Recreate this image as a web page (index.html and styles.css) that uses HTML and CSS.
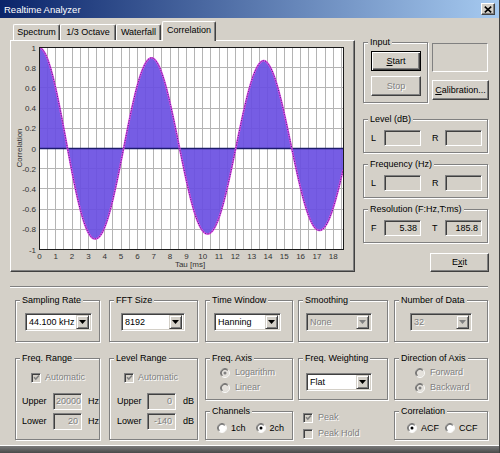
FILE: index.html
```html
<!DOCTYPE html>
<html>
<head>
<meta charset="utf-8">
<title>Realtime Analyzer</title>
<link rel="stylesheet" href="styles.css">
</head>
<body>
<div class="window">
  <div class="titlebar">
    <span class="title">Realtime Analyzer</span>
    <span class="close"><svg class="close-x" viewBox="0 0 8 7"><path d="M0.8 0.6L7.2 6.4M7.2 0.6L0.8 6.4"/></svg></span>
  </div>

  <div class="top">
    <div class="tabarea">
      <div class="tabs">
        <div class="tab t1">Spectrum</div>
        <div class="tab t2">1/3 Octave</div>
        <div class="tab t3">Waterfall</div>
        <div class="tab active">Correlation</div>
      </div>
      <div class="panel">
        <svg class="chart" width="343" height="230" viewBox="0 0 343 230">
          <rect class="plot-bg" x="28.5" y="6.5" width="304" height="202"/>
          <path class="grid" d="M36.5 7V208M44.5 7V208M52.5 7V208M61.5 7V208M69.5 7V208M77.5 7V208M85.5 7V208M93.5 7V208M101.5 7V208M110.5 7V208M118.5 7V208M126.5 7V208M134.5 7V208M142.5 7V208M150.5 7V208M159.5 7V208M167.5 7V208M175.5 7V208M183.5 7V208M191.5 7V208M199.5 7V208M208.5 7V208M216.5 7V208M224.5 7V208M232.5 7V208M240.5 7V208M248.5 7V208M256.5 7V208M265.5 7V208M273.5 7V208M281.5 7V208M289.5 7V208M297.5 7V208M305.5 7V208M314.5 7V208M322.5 7V208M330.5 7V208M29 26.5H332M29 46.5H332M29 67.5H332M29 87.5H332M29 127.5H332M29 147.5H332M29 168.5H332M29 188.5H332"/>
          <path id="fill" class="curve-fill" d=""/>
          <path class="zero" d="M28.5 107.5H332.5"/>
          <path id="curve" class="curve-line" d=""/>
          <path id="curve2" class="curve-dots" d=""/>
          <rect class="plot-border" x="28.5" y="6.5" width="304" height="202"/>
          <text class="ax yl" x="25" y="9.5">1</text>
          <text class="ax yl" x="25" y="29.7">0.8</text>
          <text class="ax yl" x="25" y="49.9">0.6</text>
          <text class="ax yl" x="25" y="70.1">0.4</text>
          <text class="ax yl" x="25" y="90.3">0.2</text>
          <text class="ax yl" x="25" y="110.5">0</text>
          <text class="ax yl" x="25" y="130.7">-0.2</text>
          <text class="ax yl" x="25" y="150.9">-0.4</text>
          <text class="ax yl" x="25" y="171.1">-0.6</text>
          <text class="ax yl" x="25" y="191.3">-0.8</text>
          <text class="ax yl" x="25" y="211.5">-1</text>
          <text class="ax xl" x="28.5" y="217.5">0</text>
          <text class="ax xl" x="44.8" y="217.5">1</text>
          <text class="ax xl" x="61.1" y="217.5">2</text>
          <text class="ax xl" x="77.5" y="217.5">3</text>
          <text class="ax xl" x="93.8" y="217.5">4</text>
          <text class="ax xl" x="110.1" y="217.5">5</text>
          <text class="ax xl" x="126.4" y="217.5">6</text>
          <text class="ax xl" x="142.7" y="217.5">7</text>
          <text class="ax xl" x="159.1" y="217.5">8</text>
          <text class="ax xl" x="175.4" y="217.5">9</text>
          <text class="ax xl" x="191.7" y="217.5">10</text>
          <text class="ax xl" x="208" y="217.5">11</text>
          <text class="ax xl" x="224.3" y="217.5">12</text>
          <text class="ax xl" x="240.7" y="217.5">13</text>
          <text class="ax xl" x="257" y="217.5">14</text>
          <text class="ax xl" x="273.3" y="217.5">15</text>
          <text class="ax xl" x="289.6" y="217.5">16</text>
          <text class="ax xl" x="305.9" y="217.5">17</text>
          <text class="ax xl" x="322.3" y="217.5">18</text>
          <text class="ax xl" x="179" y="225.5">Tau [ms]</text>
          <text class="ax xl" transform="translate(11 107) rotate(-90)">Correlation</text>
        </svg>
      </div>
    </div>

    <div class="side">
      <div class="side-top">
        <div class="group g-input">
          <div class="gtitle">Input</div>
          <div class="gbody input-body">
            <div class="btn w50 default"><span><u>S</u>tart</span></div>
            <div class="btn w50 disabled"><span>Stop</span></div>
          </div>
        </div>
        <div class="side-tr">
          <div class="frame"></div>
          <div class="btn w57"><span><u>C</u>alibration...</span></div>
        </div>
      </div>

      <div class="group g-side g-level">
        <div class="gtitle">Level (dB)</div>
        <div class="gbody side-body">
          <div class="lr-row">
            <span class="lbl">L</span><span class="field f37"></span>
            <span class="lbl lbl-r">R</span><span class="field f37"></span>
          </div>
        </div>
      </div>

      <div class="group g-side g-next">
        <div class="gtitle">Frequency (Hz)</div>
        <div class="gbody side-body">
          <div class="lr-row">
            <span class="lbl">L</span><span class="field f37"></span>
            <span class="lbl lbl-r">R</span><span class="field f37"></span>
          </div>
        </div>
      </div>

      <div class="group g-side g-next">
        <div class="gtitle">Resolution (F:Hz,T:ms)</div>
        <div class="gbody side-body">
          <div class="lr-row">
            <span class="lbl">F</span><span class="field f37">5.38</span>
            <span class="lbl lbl-r">T</span><span class="field f37">185.8</span>
          </div>
        </div>
      </div>

      <div class="btn exit"><span>E<u>x</u>it</span></div>
    </div>
  </div>

  <div class="sep"></div>

  <div class="controls">
    <div class="group c-sr">
      <div class="gtitle">Sampling Rate</div>
      <div class="gbody sel-body pl9">
        <div class="select w67"><span class="val">44.100 kHz</span><span class="dd"><svg class="arrow" viewBox="0 0 7 4"><path d="M0 0H7L3.5 4Z"/></svg></span></div>
      </div>
    </div>
    <div class="group c-fft">
      <div class="gtitle">FFT Size</div>
      <div class="gbody sel-body pl11">
        <div class="select w64"><span class="val">8192</span><span class="dd"><svg class="arrow" viewBox="0 0 7 4"><path d="M0 0H7L3.5 4Z"/></svg></span></div>
      </div>
    </div>
    <div class="group c-tw">
      <div class="gtitle">Time Window</div>
      <div class="gbody sel-body pl8">
        <div class="select w67"><span class="val">Hanning</span><span class="dd"><svg class="arrow" viewBox="0 0 7 4"><path d="M0 0H7L3.5 4Z"/></svg></span></div>
      </div>
    </div>
    <div class="group c-sm">
      <div class="gtitle">Smoothing</div>
      <div class="gbody sel-body pl7">
        <div class="select w66 sel-dis"><span class="val">None</span><span class="dd"><svg class="arrow" viewBox="0 0 7 4"><path d="M0 0H7L3.5 4Z"/></svg></span></div>
      </div>
    </div>
    <div class="group c-nd">
      <div class="gtitle">Number of Data</div>
      <div class="gbody sel-body pl15">
        <div class="select w62 sel-dis"><span class="val">32</span><span class="dd"><svg class="arrow" viewBox="0 0 7 4"><path d="M0 0H7L3.5 4Z"/></svg></span></div>
      </div>
    </div>

    <div class="group c-fr">
      <div class="gtitle">Freq. Range</div>
      <div class="gbody range-body">
        <div class="chkrow pl15"><span class="chk dis"><svg class="tick" viewBox="0 0 7 7"><path d="M1 3.3L2.8 5.1L6 1.6"/></svg></span><span class="disabled">Automatic</span></div>
        <div class="numrow first pl6"><span class="nlbl w31">Upper</span><span class="field w29 fdis">20000</span><span class="unit">Hz</span></div>
        <div class="numrow pl6"><span class="nlbl w31">Lower</span><span class="field w29 fdis">20</span><span class="unit">Hz</span></div>
      </div>
    </div>
    <div class="group c-lr">
      <div class="gtitle">Level Range</div>
      <div class="gbody range-body">
        <div class="chkrow pl14"><span class="chk dis"><svg class="tick" viewBox="0 0 7 7"><path d="M1 3.3L2.8 5.1L6 1.6"/></svg></span><span class="disabled">Automatic</span></div>
        <div class="numrow first pl7"><span class="nlbl w30">Upper</span><span class="field w29 fdis">0</span><span class="unit u7">dB</span></div>
        <div class="numrow pl7"><span class="nlbl w30">Lower</span><span class="field w29 fdis">-140</span><span class="unit u7">dB</span></div>
      </div>
    </div>
    <div class="group c-fa">
      <div class="gtitle">Freq. Axis</div>
      <div class="gbody radio-body pl14">
        <div class="rrow"><svg class="rb dis" viewBox="0 0 12 12"><circle class="rb-bg" cx="6" cy="6" r="5"/><path class="rb-d" d="M2.1 9.9A5.5 5.5 0 0 1 9.9 2.1"/><path class="rb-d2" d="M2.8 9.2A4.5 4.5 0 0 1 9.2 2.8"/><path class="rb-l" d="M9.9 2.1A5.5 5.5 0 0 1 2.1 9.9"/><circle class="rb-dot" cx="6" cy="6" r="1.8"/></svg><span class="disabled">Logarithm</span></div>
        <div class="rrow"><svg class="rb dis" viewBox="0 0 12 12"><circle class="rb-bg" cx="6" cy="6" r="5"/><path class="rb-d" d="M2.1 9.9A5.5 5.5 0 0 1 9.9 2.1"/><path class="rb-d2" d="M2.8 9.2A4.5 4.5 0 0 1 9.2 2.8"/><path class="rb-l" d="M9.9 2.1A5.5 5.5 0 0 1 2.1 9.9"/></svg><span class="disabled">Linear</span></div>
      </div>
    </div>
    <div class="group c-ch">
      <div class="gtitle">Channels</div>
      <div class="gbody one-row pl11">
        <svg class="rb" viewBox="0 0 12 12"><circle class="rb-bg" cx="6" cy="6" r="5"/><path class="rb-d" d="M2.1 9.9A5.5 5.5 0 0 1 9.9 2.1"/><path class="rb-d2" d="M2.8 9.2A4.5 4.5 0 0 1 9.2 2.8"/><path class="rb-l" d="M9.9 2.1A5.5 5.5 0 0 1 2.1 9.9"/></svg><span class="rtxt">1ch</span>
        <svg class="rb rb-next" viewBox="0 0 12 12"><circle class="rb-bg" cx="6" cy="6" r="5"/><path class="rb-d" d="M2.1 9.9A5.5 5.5 0 0 1 9.9 2.1"/><path class="rb-d2" d="M2.8 9.2A4.5 4.5 0 0 1 9.2 2.8"/><path class="rb-l" d="M9.9 2.1A5.5 5.5 0 0 1 2.1 9.9"/><circle class="rb-dot" cx="6" cy="6" r="1.8"/></svg><span class="rtxt">2ch</span>
      </div>
    </div>
    <div class="group c-fw">
      <div class="gtitle">Freq. Weighting</div>
      <div class="gbody sel-body2 pl7">
        <div class="select w66"><span class="val">Flat</span><span class="dd"><svg class="arrow" viewBox="0 0 7 4"><path d="M0 0H7L3.5 4Z"/></svg></span></div>
      </div>
    </div>
    <div class="c-pk">
      <div class="chkrow2"><span class="chk dis"><svg class="tick" viewBox="0 0 7 7"><path d="M1 3.3L2.8 5.1L6 1.6"/></svg></span><span class="disabled">Peak</span></div>
      <div class="chkrow2"><span class="chk dis"></span><span class="disabled">Peak Hold</span></div>
    </div>
    <div class="group c-da">
      <div class="gtitle">Direction of Axis</div>
      <div class="gbody radio-body pl20">
        <div class="rrow"><svg class="rb dis" viewBox="0 0 12 12"><circle class="rb-bg" cx="6" cy="6" r="5"/><path class="rb-d" d="M2.1 9.9A5.5 5.5 0 0 1 9.9 2.1"/><path class="rb-d2" d="M2.8 9.2A4.5 4.5 0 0 1 9.2 2.8"/><path class="rb-l" d="M9.9 2.1A5.5 5.5 0 0 1 2.1 9.9"/></svg><span class="disabled">Forward</span></div>
        <div class="rrow"><svg class="rb dis" viewBox="0 0 12 12"><circle class="rb-bg" cx="6" cy="6" r="5"/><path class="rb-d" d="M2.1 9.9A5.5 5.5 0 0 1 9.9 2.1"/><path class="rb-d2" d="M2.8 9.2A4.5 4.5 0 0 1 9.2 2.8"/><path class="rb-l" d="M9.9 2.1A5.5 5.5 0 0 1 2.1 9.9"/><circle class="rb-dot" cx="6" cy="6" r="1.8"/></svg><span class="disabled">Backward</span></div>
      </div>
    </div>
    <div class="group c-co">
      <div class="gtitle">Correlation</div>
      <div class="gbody one-row pl12">
        <svg class="rb" viewBox="0 0 12 12"><circle class="rb-bg" cx="6" cy="6" r="5"/><path class="rb-d" d="M2.1 9.9A5.5 5.5 0 0 1 9.9 2.1"/><path class="rb-d2" d="M2.8 9.2A4.5 4.5 0 0 1 9.2 2.8"/><path class="rb-l" d="M9.9 2.1A5.5 5.5 0 0 1 2.1 9.9"/><circle class="rb-dot" cx="6" cy="6" r="1.8"/></svg><span class="rtxt">ACF</span>
        <svg class="rb rb-next2" viewBox="0 0 12 12"><circle class="rb-bg" cx="6" cy="6" r="5"/><path class="rb-d" d="M2.1 9.9A5.5 5.5 0 0 1 9.9 2.1"/><path class="rb-d2" d="M2.8 9.2A4.5 4.5 0 0 1 9.2 2.8"/><path class="rb-l" d="M9.9 2.1A5.5 5.5 0 0 1 2.1 9.9"/></svg><span class="rtxt">CCF</span>
      </div>
    </div>
  </div>

  <div class="bottom-edge"></div>
</div>
<script src="script.js"></script>
</body>
</html>
```

FILE: styles.css
```css
* { box-sizing: border-box; }
html, body { margin: 0; padding: 0; }
body {
  width: 500px; height: 453px; overflow: hidden;
  background: #d4d0c8;
  font-family: "Liberation Sans", Arial, sans-serif;
  font-size: 9px; line-height: 11px; color: #000;
}
.window {
  width: 500px; height: 453px;
  display: flex; flex-direction: column;
  background: #d4d0c8;
  border-right: 1px solid #404040;
}

/* title bar */
.titlebar {
  flex: none; height: 18px;
  display: flex; align-items: center; justify-content: space-between;
  padding: 0 4px;
  background: linear-gradient(to right, #0a246a, #a6caf0);
  color: #fff;
}
.title { font-size: 9.5px; }
.close {
  width: 14px; height: 12px;
  display: flex; align-items: center; justify-content: center;
  background: #d4d0c8;
  border: 1px solid; border-color: #fff #404040 #404040 #fff;
  box-shadow: inset -1px -1px #808080;
}
.close-x { width: 8px; height: 7px; display: block; }
.close-x path { stroke: #000; stroke-width: 1.6; fill: none; }

/* top area */
.top { flex: none; height: 254px; display: flex; padding: 3px 0 0 10px; }
.tabarea { width: 345px; display: flex; flex-direction: column; }
.tabs { height: 19px; display: flex; align-items: flex-end; padding-left: 3px; }
.tab {
  height: 16px; text-align: center; line-height: 14px; white-space: nowrap;
  border-top: 1px solid #fff; border-left: 1px solid #fff; border-right: 1px solid #404040;
  box-shadow: inset -1px 0 #808080;
  border-radius: 2px 2px 0 0;
}
.t1 { width: 47px; }
.t2 { width: 56px; }
.t3 { width: 45px; }
.tab.active {
  width: 54px; height: 20px; margin-left: 1px; margin-bottom: -1px;
  line-height: 16px; background: #d4d0c8;
  position: relative; z-index: 1;
}
.panel {
  height: 232px;
  border: 1px solid; border-color: #fff #404040 #404040 #fff;
  box-shadow: inset -1px -1px #808080;
}
.chart { display: block; }
.plot-bg { fill: #fff; }
.grid { stroke: #b4b4b4; stroke-width: 1; fill: none; }
.curve-fill { fill: #6a4fe2; fill-opacity: 0.92; }
.zero { stroke: #1c1c6c; stroke-width: 1.6; }
.curve-line { fill: none; stroke: #e04ee6; stroke-width: 1.8; stroke-linejoin: round; }
.curve-dots { fill: none; stroke: #1d1d70; stroke-width: 0.8; stroke-dasharray: 1.2 1.3; }
.plot-border { fill: none; stroke: #1a1a1a; stroke-width: 1; }
.ax { font-family: "Liberation Sans", Arial, sans-serif; font-size: 8px; fill: #333; }
.yl { text-anchor: end; }
.xl { text-anchor: middle; }

/* side column */
.side { width: 126px; margin-left: 8px; display: flex; flex-direction: column; }
.side-top { display: flex; gap: 4px; margin-top: 21px; }
.group {
  display: flex; flex-direction: column;
  border: 1px solid #808080;
  box-shadow: inset 1px 1px #fff, 1px 1px #fff;
}
.gtitle {
  align-self: flex-start;
  height: 12px; line-height: 12px; white-space: nowrap;
  margin: -7px 0 -5px 4px; padding: 0 2px;
  background: #d4d0c8;
}
.gbody { display: flex; flex-direction: column; }
.g-input { width: 65px; height: 61px; }
.input-body { padding: 8px 0 0 7px; gap: 5px; }
.btn {
  height: 20px;
  display: flex; align-items: center; justify-content: center;
  background: #d4d0c8; white-space: nowrap;
  border: 1px solid; border-color: #fff #404040 #404040 #fff;
  box-shadow: inset -1px -1px #808080;
}
.btn.default {
  border-color: #000;
  box-shadow: inset 1px 1px #fff, inset -1px -1px #404040, inset -2px -2px #808080;
}
.w50 { width: 50px; }
.w57 { width: 57px; }
.disabled { color: #808080; text-shadow: 1px 1px #fff; }
.side-tr { display: flex; flex-direction: column; gap: 8px; margin-top: 1px; }
.frame { width: 56px; height: 29px; border: 1px solid; border-color: #808080 #fff #fff #808080; }
.g-side { width: 125px; height: 34px; }
.g-level { margin-top: 16px; }
.g-next { margin-top: 11px; }
.side-body { padding: 10px 0 0 7px; }
.lr-row { display: flex; align-items: center; height: 16px; }
.lbl { width: 13px; }
.lbl-r { margin-left: 11px; }
.field {
  height: 16px; line-height: 14px; text-align: right; white-space: nowrap;
  padding: 0 3px 0 2px;
  border: 1px solid; border-color: #808080 #fff #fff #808080;
  box-shadow: inset 1px 1px #404040, inset -1px -1px #d4d0c8;
  background: #d4d0c8;
}
.f37 { width: 37px; }
.exit { width: 59px; height: 19px; margin-top: 10px; align-self: flex-end; }

/* separator */
.sep {
  flex: none; width: 478px; height: 2px; margin: 14px 0 0 10px;
  border-top: 1px solid #808080; border-bottom: 1px solid #fff;
}

/* bottom controls */
.controls {
  flex: none;
  margin: 12px 0 0 15px;
  display: grid;
  grid-template-columns: 94px 96px 93px 96px 94px;
  grid-template-rows: 58px 53px 29px;
  grid-template-areas:
    "sr fft tw sm nd"
    "fr lr fa fw da"
    "fr lr ch pk co";
}
.c-sr { grid-area: sr; width: 85px; height: 42px; }
.c-fft { grid-area: fft; width: 89px; height: 42px; }
.c-tw { grid-area: tw; width: 88px; height: 42px; }
.c-sm { grid-area: sm; width: 90px; height: 42px; }
.c-nd { grid-area: nd; width: 94px; height: 42px; }
.c-fr { grid-area: fr; width: 85px; height: 82px; }
.c-lr { grid-area: lr; width: 89px; height: 82px; }
.c-fa { grid-area: fa; width: 88px; height: 42px; }
.c-ch { grid-area: ch; width: 88px; height: 29px; }
.c-fw { grid-area: fw; width: 90px; height: 42px; }
.c-pk { grid-area: pk; padding: 1px 0 0 5px; display: flex; flex-direction: column; gap: 5px; }
.c-da { grid-area: da; width: 94px; height: 42px; }
.c-co { grid-area: co; width: 94px; height: 29px; }

.pl6 { padding-left: 6px; }
.pl7 { padding-left: 7px; }
.pl8 { padding-left: 8px; }
.pl9 { padding-left: 9px; }
.pl11 { padding-left: 11px; }
.pl12 { padding-left: 12px; }
.pl14 { padding-left: 14px; }
.pl15 { padding-left: 15px; }
.pl20 { padding-left: 20px; }

.sel-body { padding-top: 12px; }
.sel-body2 { padding-top: 14px; }
.select {
  height: 18px; padding: 2px;
  display: flex; align-items: center;
  border: 1px solid; border-color: #808080 #fff #fff #808080;
  box-shadow: inset 1px 1px #404040, inset -1px -1px #d4d0c8;
  background: #fff;
}
.w62 { width: 62px; }
.w64 { width: 64px; }
.w66 { width: 66px; }
.w67 { width: 67px; }
.val { flex: 1; padding-left: 1px; line-height: 12px; white-space: nowrap; overflow: hidden; }
.dd {
  flex: none; width: 13px; height: 14px;
  display: flex; align-items: center; justify-content: center;
  background: #d4d0c8;
  border: 1px solid; border-color: #d4d0c8 #404040 #404040 #d4d0c8;
  box-shadow: inset 1px 1px #fff, inset -1px -1px #808080;
}
.arrow { width: 7px; height: 4px; display: block; }
.arrow path { fill: #000; }
.sel-dis { background: #d4d0c8; }
.sel-dis .val { color: #808080; text-shadow: 1px 1px #fff; }
.sel-dis .arrow path { fill: #808080; }

.range-body { padding-top: 12px; }
.chkrow { height: 13px; display: flex; align-items: center; gap: 4px; }
.numrow { height: 17px; display: flex; align-items: center; margin-top: 3px; }
.numrow.first { margin-top: 9px; }
.nlbl { flex: none; }
.w31 { width: 31px; }
.w30 { width: 30px; }
.w29 { width: 29px; height: 17px; line-height: 15px; }
.fdis { color: #808080; text-shadow: 1px 1px #fff; }
.unit { margin-left: 6px; }
.u7 { margin-left: 7px; }

.chk {
  flex: none; width: 10px; height: 10px;
  display: flex; align-items: center; justify-content: center;
  border: 1px solid; border-color: #808080 #fff #fff #808080;
  box-shadow: inset 1px 1px #404040, inset -1px -1px #d4d0c8;
  background: #fff;
}
.chk.dis { background: #d4d0c8; }
.tick { width: 7px; height: 7px; display: block; }
.tick path { fill: none; stroke: #808080; stroke-width: 1.5; }
.chkrow2 { height: 11px; display: flex; align-items: center; gap: 5px; }

.radio-body { padding-top: 7px; gap: 2px; }
.rrow { height: 13px; display: flex; align-items: center; gap: 5px; white-space: nowrap; }
.one-row { flex-direction: row; align-items: center; padding-top: 9px; height: 23px; }
.rb { flex: none; width: 10px; height: 10px; display: block; }
.rb-bg { fill: #fff; }
.rb.dis .rb-bg { fill: #e4e1dc; }
.rb-d { fill: none; stroke: #808080; stroke-width: 1; }
.rb-d2 { fill: none; stroke: #404040; stroke-width: 1; }
.rb-l { fill: none; stroke: #fff; stroke-width: 1; }
.rb-dot { fill: #000; }
.rb.dis .rb-dot { fill: #808080; }
.rtxt { margin-left: 4px; white-space: nowrap; }
.rb-next { margin-left: 10px; }
.rb-next2 { margin-left: 6px; }

.bottom-edge {
  margin-top: auto; flex: none; height: 8px;
  border-top: 1px solid #fff;
  background: linear-gradient(#7a7a7a, #4a4a4a);
}
```

FILE: script.js
```js
(function () {
  var P = 6.87, X0 = 28.5, SX = 16.32, Y0 = 107.5, SY = 101;
  var ek = [[0, 1], [3.44, 0.894], [6.88, 0.898], [10.32, 0.845], [13.76, 0.87], [17.2, 0.81], [18.7, 0.8]];
  function env(t) {
    for (var i = 1; i < ek.length; i++) {
      if (t <= ek[i][0]) {
        var a = ek[i - 1], b = ek[i];
        return a[1] + (b[1] - a[1]) * (t - a[0]) / (b[0] - a[0]);
      }
    }
    return 0.8;
  }
  var pts = [];
  var tmax = (332.5 - X0) / SX;
  for (var t = 0; t <= tmax + 0.001; t += 0.04) {
    var v = env(t) * Math.cos(2 * Math.PI * t / P);
    pts.push([X0 + t * SX, Y0 - v * SY]);
  }
  var line = 'M' + pts.map(function (p) { return p[0].toFixed(2) + ' ' + p[1].toFixed(2); }).join('L');
  var last = pts[pts.length - 1];
  var fill = line + 'L' + last[0].toFixed(2) + ' ' + Y0 + 'L' + X0 + ' ' + Y0 + 'Z';
  document.getElementById('fill').setAttribute('d', fill);
  document.getElementById('curve').setAttribute('d', line);
  document.getElementById('curve2').setAttribute('d', line);
})();
```
